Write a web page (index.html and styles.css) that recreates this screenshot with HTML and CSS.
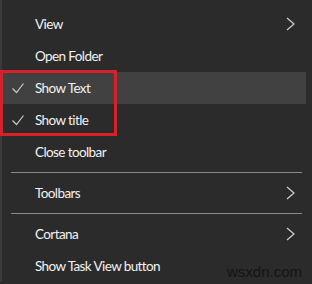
FILE: index.html
```html
<!DOCTYPE html>
<html lang="en">

<head>
  <meta charset="UTF-8" />
  <meta name="viewport" content="width=device-width, initial-scale=1.0">
  <title>Toolbar Menu</title>
  <link rel="stylesheet" href="styles.css">
</head>

<body>
  <div class="menu">
    <div class="item">
      <span class="check"></span>
      <span class="label">View</span>
      <svg class="chevron" width="9" height="14" viewBox="0 0 9 14"><polyline points="1,1 8,7 1,13" /></svg>
    </div>
    <div class="item">
      <span class="check"></span>
      <span class="label">Open Folder</span>
    </div>
    <div class="item hover">
      <span class="check"><svg width="12" height="11" viewBox="0 0 12 11"><polyline points="0.5,5.5 4.5,9.5 11.5,0.5" /></svg></span>
      <span class="label">Show Text</span>
    </div>
    <div class="item">
      <span class="check"><svg width="12" height="11" viewBox="0 0 12 11"><polyline points="0.5,5.5 4.5,9.5 11.5,0.5" /></svg></span>
      <span class="label">Show title</span>
    </div>
    <div class="item">
      <span class="check"></span>
      <span class="label">Close toolbar</span>
    </div>
    <div class="separator"></div>
    <div class="item">
      <span class="check"></span>
      <span class="label">Toolbars</span>
      <svg class="chevron" width="9" height="14" viewBox="0 0 9 14"><polyline points="1,1 8,7 1,13" /></svg>
    </div>
    <div class="separator"></div>
    <div class="item">
      <span class="check"></span>
      <span class="label">Cortana</span>
      <svg class="chevron" width="9" height="14" viewBox="0 0 9 14"><polyline points="1,1 8,7 1,13" /></svg>
    </div>
    <div class="item">
      <span class="check"></span>
      <span class="label">Show Task View button</span>
    </div>
  </div>

  <!-- annotation on top of the screenshot -->
  <div class="highlight-box"></div>
  <div class="watermark">wsxdn.com</div>
</body>

</html>
```

FILE: styles.css
```css
body {
  margin: 0;
  padding: 0;
  width: 312px;
  height: 284px;
  overflow: hidden;
  background-color: #2b2b2b;
  font-family: 'Lato', sans-serif;
  position: relative;
}

.menu {
  width: 304px;
  padding-top: 8px;
  border-left: 2px solid #3a3a3a;
}

.item {
  display: flex;
  align-items: center;
  height: 32px;
  color: #f2f2f2;
  font-size: 13.5px;
  letter-spacing: -0.6px;
}

.item.hover {
  background-color: #414141;
}

.check {
  width: 33px;
  display: flex;
  justify-content: flex-end;
}

.check svg {
  margin-right: 11px;
}

.check polyline {
  fill: none;
  stroke: #c8c8c8;
  stroke-width: 1.2;
}

.label {
  flex: 1;
  line-height: 32px;
}

.chevron {
  margin-right: 11px;
}

.chevron polyline {
  fill: none;
  stroke: #d0d0d0;
  stroke-width: 1.2;
}

.separator {
  height: 1px;
  margin: 4px 4px 4px 9px;
  background-color: #8a8a8a;
}

.highlight-box {
  position: absolute;
  left: 0;
  top: 70px;
  width: 111px;
  height: 60px;
  border: 3px solid #d6202a;
}

.watermark {
  position: absolute;
  right: 10px;
  top: 263px;
  font-family: 'Liberation Sans', sans-serif;
  font-size: 15px;
  color: #141414;
}
```
